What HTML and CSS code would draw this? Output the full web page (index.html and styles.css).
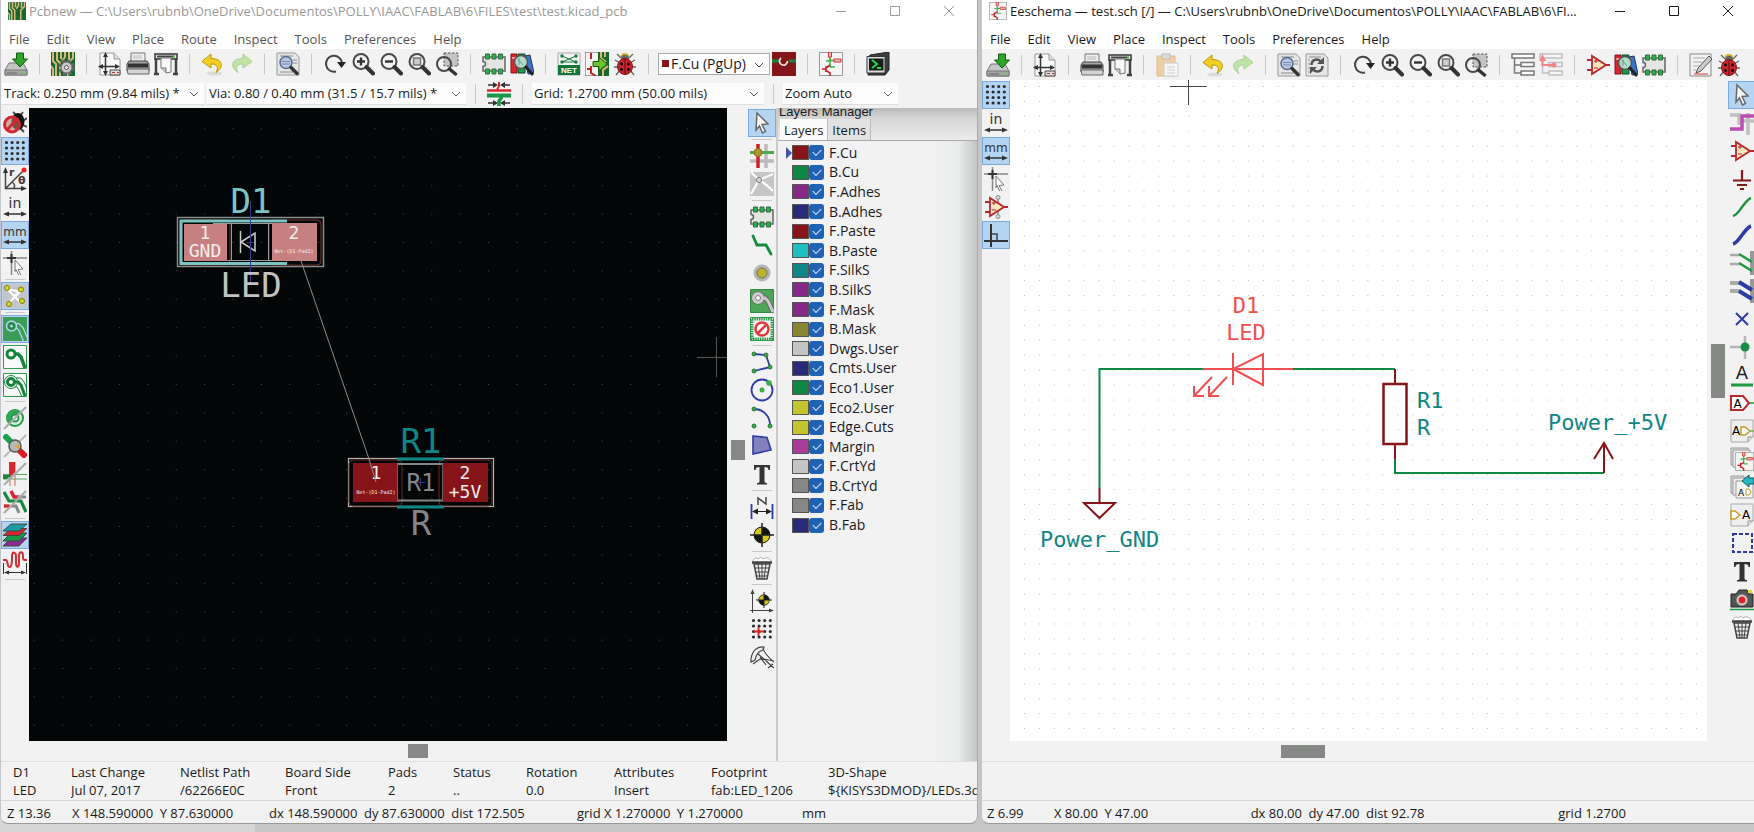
FILE: index.html
```html
<!DOCTYPE html>
<html lang="en">
<head>
<meta charset="utf-8">
<title>Pcbnew and Eeschema</title>
<link rel="stylesheet" href="styles.css">
</head>
<body>
<svg class="sprite" aria-hidden="true">
<symbol id="save" viewBox="0 0 24 24"><path d="M5 11h14l4 7v5H1v-5z" fill="#c4c6c4" stroke="#777"/><path d="M1 18h22v5H1z" fill="#a3a5a3" stroke="#777"/><path d="M3 21h10" stroke="#666"/><circle cx="19" cy="20.500" r="1" fill="#3e3"/><path d="M12.500 1h7v6h4L16 15 8.500 7h4z" fill="#2fa32a" stroke="#115c0e"/></symbol>
<symbol id="board" viewBox="0 0 24 24"><path d="M0 0h24v24H0z" fill="#15692f"/><path d="M2 0v9l3 3v12M6 0v8l3 3v13M10 0v7M14 0v5l-3 4M18 0v8M22 0v6l-5 5v13M0 14l2 3v7" stroke="#dcb77a" stroke-width="2" fill="none"/></symbol>
<symbol id="boardgear" viewBox="0 0 24 24"><use href="#board"/><circle cx="15.500" cy="15.500" r="6" fill="none" stroke="#666" stroke-width="4.500" stroke-dasharray="3 1.700"/><circle cx="15.500" cy="15.500" r="5.500" fill="#c9c9c9" stroke="#666"/><circle cx="15.500" cy="15.500" r="2" fill="#eee" stroke="#555"/></symbol>
<symbol id="page" viewBox="0 0 24 24"><path d="M2 1h14l6 6v16H2z" fill="#fafafa" stroke="#999"/><path d="M16 1v6h6" fill="#ddd" stroke="#999"/><path d="M7.500 3v18M1 14.500h19" stroke="#333" stroke-width="1.500"/><path d="M7.500 0L5 5h5zM7.500 24L5 19h5zM0 14.500l5-2.500v5zM22 14.500L17 12v5z" fill="#333"/><path d="M12 18h10v5H12z" fill="#ddd" stroke="#544"/><path d="M14 20.500h3M19 20.500h2" stroke="#a33"/></symbol>
<symbol id="print" viewBox="0 0 24 24"><path d="M5 1h14v9H5z" fill="#eee" stroke="#777"/><path d="M3 9h18l2 3v7H1v-7z" fill="#a5a7a5" stroke="#444"/><path d="M2 13.500h20" stroke="#333" stroke-width="4"/><path d="M1 17h22v5H2z" fill="#d4d4d4" stroke="#666"/><path d="M7 4h9M7 6h9" stroke="#bbb"/></symbol>
<symbol id="plot" viewBox="0 0 24 24"><path d="M2 6v16M22 6v16M0 22h5M19 22h5" stroke="#444" stroke-width="2.500"/><path d="M1 2h22v5H1z" fill="#e5e5e5" stroke="#333" stroke-width="1.500"/><path d="M3 4.500h18" stroke="#444" stroke-width="2"/><path d="M7 6h10v14l-5 1-5-5z" fill="#f8f8f8" stroke="#777"/><path d="M7 16h5v5" fill="#ccc" stroke="#777"/><circle cx="20" cy="4.500" r="1" fill="#3e3"/></symbol>
<symbol id="undo" viewBox="0 0 24 24"><ellipse cx="13" cy="21.500" rx="8" ry="2" fill="#ddd"/><path d="M10 2L1 9.500l9 6.500v-4c6-.5 8 3.500 5 8.500 8-5 7.500-14-5-14z" fill="#f2cf24" stroke="#bb9600"/></symbol>
<symbol id="redo" viewBox="0 0 24 24"><path d="M14 2l9 7.500-9 6.500v-4c-6-.5-8 3.500-5 8.500-8-5-7.500-14 5-14z" fill="#c2e3a6" stroke="#a8d18e"/></symbol>
<symbol id="lens" viewBox="0 0 24 24"><circle cx="10" cy="9.500" r="7.500" fill="none" stroke="#484a48" stroke-width="2"/><path d="M15.500 15l6.500 6.500" stroke="#333" stroke-width="4" stroke-linecap="round"/></symbol>
<symbol id="find" viewBox="0 0 24 24"><path d="M1 1h18l4 4v18H1z" fill="#e6e6e6" stroke="#999"/><path d="M4 4h13M4 20h13M17 8h4M17 11h4" stroke="#aaa" stroke-width="1.500"/><circle cx="10" cy="10.500" r="6" fill="#b9c6e2" stroke="#586a92" stroke-width="1.500"/><path d="M6 9.500h8M6 12h8" stroke="#7a8bb4"/><path d="M15 15.500l6 6" stroke="#333" stroke-width="3.500" stroke-linecap="round"/></symbol>
<symbol id="swap" viewBox="0 0 24 24"><path d="M1 1h18l4 4v18H1z" fill="#e6e6e6" stroke="#999"/><path d="M4 4h12M3 7h2M3 11h2M3 15h2M3 19h2" stroke="#aaa" stroke-width="1.500"/><path d="M6.500 12c0-6 7-7 9.500-3M17.500 13c0 6-7 7-9.500 3" fill="none" stroke="#555" stroke-width="2.500"/><path d="M19 4v7h-7zM5 21v-7h7z" fill="#555"/></symbol>
<symbol id="rotate" viewBox="0 0 24 24"><path d="M13 19.500a8 8 0 1 1 6-8" fill="none" stroke="#444" stroke-width="2"/><path d="M14 10h9l-4.500 6z" fill="#222"/></symbol>
<symbol id="zin" viewBox="0 0 24 24"><use href="#lens"/><path d="M10 5.500v8M6 9.500h8" stroke="#333" stroke-width="2.400"/></symbol>
<symbol id="zout" viewBox="0 0 24 24"><use href="#lens"/><path d="M6 9.500h8" stroke="#333" stroke-width="2.400"/></symbol>
<symbol id="zfit" viewBox="0 0 24 24"><use href="#lens"/><path d="M6.500 6h7v7h-7z" fill="#ccc" stroke="#777" stroke-width="1.500"/></symbol>
<symbol id="zsel" viewBox="0 0 24 24"><path d="M9 1h14v13H9z" fill="#c4c4c4" stroke="#555" stroke-dasharray="2.500 1.500"/><circle cx="9" cy="12" r="7" fill="none" stroke="#484a48" stroke-width="2"/><path d="M14.500 17l6 5" stroke="#333" stroke-width="3.500" stroke-linecap="round"/></symbol>
<symbol id="chipicon" viewBox="0 0 24 24"><path d="M1 5h22v14H1v-4.500a2.500 2.500 0 0 0 0-5z" fill="#e4e6e4" stroke="#666" stroke-width="1.500"/><path d="M3.500 2h4v5h-4zM10 2h4v5h-4zM16.500 2h4v5h-4zM3.500 17h4v5h-4zM10 17h4v5h-4zM16.500 17h4v5h-4z" fill="#2cb04b" stroke="#35683f"/></symbol>
<symbol id="lib" viewBox="0 0 24 24"><path d="M1 2h6v19H1z" fill="#d8262e" stroke="#811"/><path d="M8 2h7v19H8z" fill="#1c9c48" stroke="#143"/><path d="M15 4l5-1 4 18-6 1z" fill="#3d74c8" stroke="#235"/><path d="M2 6h4" stroke="#fff"/><circle cx="11" cy="10" r="6.500" fill="#cfe8e0" fill-opacity=".85" stroke="#555" stroke-width="1.500"/><path d="M8 7l5 6M9 13V6" stroke="#5a8"/><path d="M16 15l6 7" stroke="#222" stroke-width="3" stroke-linecap="round"/></symbol>
<symbol id="sch" viewBox="0 0 24 24"><path d="M.500.500h23v23H.500z" fill="#f7f5f3" stroke="#999"/><path d="M11 5v10M7 9h4M11 8.500h4M11 15h5" fill="none" stroke="#3ab54a" stroke-width="1.500"/><path d="M9.500 0h3v5h-3zM15 7h7v3h-7z" fill="#f3b9b0" stroke="#d0303a"/><path d="M3 17h4M7 14v6M7 16l4-3M7 18.500l4 2.500v3" fill="none" stroke="#c8202a" stroke-width="1.600"/><circle cx="11" cy="8.500" r="1.300" fill="#3ab54a"/></symbol>
<symbol id="update" viewBox="0 0 24 24"><path d="M0 0h14v24H0z" fill="#f7f5f3" stroke="#555"/><path d="M13 0h11v24H13z" fill="#15692f"/><path d="M16 0v6l5 4M20 0v5M18 24v-6l5-4" stroke="#dcb77a" stroke-width="2" fill="none"/><path d="M6 1v6M2 17h4M6 14v7l5 3" stroke="#c8202a" stroke-width="2" fill="none"/><path d="M8 9.500h6V5l8 7-8 7v-4.500H8z" fill="#6dc52e" stroke="#275a0c"/></symbol>
<symbol id="bug" viewBox="0 0 24 24"><path d="M4 2l4 4M20 2l-4 4M2 8l5 3M22 8l-5 3M1 15h6M23 15h-6M3 23l4-5M21 23l-4-5" stroke="#666" stroke-width="1.300"/><circle cx="12" cy="5.500" r="4" fill="#666"/><path d="M8 4l2-2h4l2 2" fill="none" stroke="#e3c020" stroke-width="1.500"/><ellipse cx="12" cy="14.500" rx="7.500" ry="8" fill="#c9252b" stroke="#811"/><path d="M12 7v15" stroke="#511"/><circle cx="8.500" cy="12" r="1.400"/><circle cx="15.500" cy="12" r="1.400"/><circle cx="8.500" cy="17.500" r="1.400"/><circle cx="15.500" cy="17.500" r="1.400"/></symbol>
<symbol id="pair" viewBox="0 0 24 24"><path d="M0 0h24v24H0z" fill="#841518"/><path d="M0 9h24" stroke="#0d8a45" stroke-width="3"/><circle cx="12" cy="9" r="5" fill="#841518"/><path d="M9 6a4 4 0 1 0 6.500 3" fill="none" stroke="#e5dede" stroke-width="1.800"/></symbol>
<symbol id="console" viewBox="0 0 24 24"><path d="M4 3l19-3v18l-4 5H2V7z" fill="#3c3f41" stroke="#222"/><path d="M1 4.500h18V21H1z" fill="#ddd" stroke="#333"/><path d="M3 6.500h14.500v12H3z" fill="#16201a"/><path d="M6 8l5 4-5 4" fill="none" stroke="#2ed44e" stroke-width="2"/><path d="M11 16h4" stroke="#2ed44e" stroke-width="2"/></symbol>
<symbol id="track" viewBox="0 0 24 24"><path d="M0 8.500h24" stroke="#d8262e" stroke-width="2.500"/><path d="M0 13.500h24" stroke="#199648" stroke-width="4"/><path d="M1 3h7M23 3h-7M1 21h7M23 21h-7" stroke="#333" stroke-width="1.500"/><path d="M6 0l5 3-5 3zM18 0l-5 3 5 3zM6 18l5 3-5 3zM18 18l-5 3 5 3z" fill="#333"/><path d="M12 0v4l-2 4" stroke="#d8262e" stroke-width="2" fill="none"/><path d="M12 24v-5l3-4" stroke="#199648" stroke-width="3.500" fill="none"/></symbol>
<symbol id="nodrc" viewBox="0 0 24 24"><path d="M10 1l3 3M20 1l-3 4M24 7l-4 3M24 16l-4-2M21 21l-4-4" stroke="#444" stroke-width="1.800"/><ellipse cx="15" cy="10.500" rx="6.500" ry="8.500" fill="#111"/><circle cx="9" cy="13.500" r="7.500" fill="#b77" fill-opacity=".6" stroke="#d0282e" stroke-width="3"/><path d="M4 19L14 8" stroke="#d0282e" stroke-width="3"/></symbol>
<symbol id="grid" viewBox="0 0 24 24"><path d="M3.500 3.500h19M3.500 9h19M3.500 14.500h19M3.500 20h19" stroke="#2e2e33" stroke-width="3.200" stroke-linecap="round" stroke-dasharray="0 5.600"/></symbol>
<symbol id="arrows" viewBox="0 0 24 24"><path d="M4 19h16" stroke="#333" stroke-width="1.500"/><path d="M0 19l6-2.500v5zM24 19l-6-2.500v5z" fill="#333"/></symbol>
<symbol id="pointer" viewBox="0 0 24 24"><path d="M7 2l11 11-6 .5 3.500 7-3 1.500-3-7-3.500 4z" fill="#fff" stroke="#666" stroke-width="1.500"/></symbol>
<symbol id="curs" viewBox="0 0 24 24"><path d="M0 7h24M8.500 0v24" stroke="#888" stroke-width="1.500"/><path d="M4 7h9M8.500 3v9" stroke="#333" stroke-width="2"/><path d="M12 9l8 9-5 .5 3 5.500-2 .5-3-6-1 2z" fill="#fff" stroke="#777"/></symbol>
<symbol id="rats" viewBox="0 0 24 24"><rect width="24" height="24" rx="3" fill="#c3c5c6"/><path d="M4 5l15 15M20 5L6 19M4 5l14 3M8 17l8-11" stroke="#fff" stroke-width="2"/><g fill="#d5dc1d" stroke="#777a10"><circle cx="4" cy="4" r="2.500"/><circle cx="18" cy="5.500" r="2.500"/><circle cx="6" cy="20" r="2.500"/><circle cx="19" cy="17" r="2.500"/></g></symbol>
<symbol id="zone1" viewBox="0 0 24 24"><path d="M0 0h24v24H0z" fill="#3d9c57"/><path d="M11 9h4l3 3 5 12" fill="none" stroke="#b7d6ee" stroke-width="6"/><path d="M11 9h4l3 3 5 12" fill="none" stroke="#3d9c57" stroke-width="3.500"/><circle cx="8.500" cy="9" r="5" fill="#3d9c57" stroke="#b7d6ee" stroke-width="1.500"/><circle cx="8.500" cy="9" r="2.500" fill="#b7d6ee" stroke="#1d8a45" stroke-width="2"/></symbol>
<symbol id="zone2" viewBox="0 0 24 24"><path d="M.500.500h23v23H.500z" fill="#fafafa" stroke="#2d9c4c"/><path d="M11 9h4l3 3 4 11" fill="none" stroke="#16853c" stroke-width="3.500"/><circle cx="8" cy="9" r="4" fill="#fff" stroke="#16853c" stroke-width="3"/></symbol>
<symbol id="zone3" viewBox="0 0 24 24"><path d="M.500.500h23v23H.500z" fill="#fafafa" stroke="#2d9c4c"/><path d="M11 9h4l3 3 4 11" fill="none" stroke="#16853c" stroke-width="3"/><path d="M13 5h5l3 4 3 7M12 14h2l2 3 3 7" fill="none" stroke="#16853c"/><circle cx="8" cy="9" r="6.500" fill="none" stroke="#16853c"/><circle cx="8" cy="9" r="3.500" fill="#fff" stroke="#16853c" stroke-width="3"/></symbol>
<symbol id="viaout" viewBox="0 0 24 24"><circle cx="12" cy="12" r="8" fill="#dff0e0" stroke="#219a47" stroke-width="2"/><path d="M18 6A8 8 0 1 0 6 18z" fill="#35a556"/><circle cx="12" cy="12" r="3.500" fill="#eee" stroke="#219a47" stroke-width="2"/><path d="M1 23L23 1" stroke="#aaa" stroke-width="2"/></symbol>
<symbol id="vianum" viewBox="0 0 24 24"><path d="M1 1l10 10" stroke="#1aa24b" stroke-width="6"/><path d="M12 12l11 11" stroke="#e01b22" stroke-width="6"/><path d="M1 23L23 1" stroke="#bbb" stroke-width="2"/><circle cx="12" cy="12" r="6" fill="#b8b8b8" stroke="#555" stroke-width="1.500"/><path d="M12 12l4-1v4z" fill="#e0a01b"/></symbol>
<symbol id="hc" viewBox="0 0 24 24"><path d="M0 12.500h24M0 17h24" stroke="#59a663"/><path d="M7 0v24M12 0v24" stroke="#c86a5a"/><path d="M6 0h6v10l-6 6z" fill="#d8262e"/><path d="M0 13h8l-4 4H0z" fill="#17863e"/><path d="M1 23L23 1" stroke="#aaa" stroke-width="2"/></symbol>
<symbol id="trk" viewBox="0 0 24 24"><path d="M8 1l3 6h5" fill="none" stroke="#d8262e" stroke-width="3.500"/><path d="M14 7h9M1 16h6" stroke="#888" stroke-width="3"/><path d="M1 16h5" stroke="#d8262e" stroke-width="3"/><path d="M8 16h5l3 7" fill="none" stroke="#888" stroke-width="3"/><path d="M1 2l5 9h12l5 11" fill="none" stroke="#158a3e" stroke-width="3.200"/><path d="M1 23L23 1" stroke="#aaa" stroke-width="2"/></symbol>
<symbol id="layers" viewBox="0 0 24 24"><g stroke="#444"><path d="M8 15h16l-8 8H0z" fill="#8f2a94"/><path d="M8 10h16l-8 8H0z" fill="#18974a"/><path d="M8 5.500h16l-8 7H0z" fill="#d8262e"/><path d="M8 1h16l-8 7H0z" fill="#1a9ca4"/></g></symbol>
<symbol id="meander" viewBox="0 0 24 24"><path d="M0 9h3c2 0 1 7 3.500 7S9 10 9 5s4-4 4 0v7c0 5 3 5 3 0V5c0-5 4-5 4 0v2c0 2 1 2 4 2" fill="none" stroke="#cf2f35" stroke-width="2"/><path d="M.500 12v11M23.500 12v11M3 21.500h18" stroke="#333"/><path d="M1 21.500l5-2v4zM23 21.500l-5-2v4z" fill="#333"/></symbol>
<symbol id="hl" viewBox="0 0 24 24"><path d="M16 0v24M0 17h24" stroke="#bbb" stroke-width="3.500"/><path d="M8 0v24" stroke="#cf2026" stroke-width="3.500"/><path d="M0 8.500h24" stroke="#4aab53" stroke-width="3"/><circle cx="8" cy="8.500" r="4" fill="#b59232" stroke="#8a6c1c"/></symbol>
<symbol id="localrats" viewBox="0 0 24 24"><path d="M0 0h24v24H0z" fill="#c6c6c6"/><path d="M9 8L1 0M9 8l14-6M9 8L1 22M9 8c6 3 10 7 14 11" fill="none" stroke="#fff" stroke-width="2"/><circle cx="9" cy="8" r="2.500" fill="#ddd" stroke="#777"/></symbol>
<symbol id="route" viewBox="0 0 24 24"><path d="M3 3l4 9h9l5 9" fill="none" stroke="#158a3e" stroke-width="2.800" stroke-linecap="round"/></symbol>
<symbol id="via" viewBox="0 0 24 24"><circle cx="12" cy="12" r="7" fill="#b0aa28" stroke="#b5b5b5" stroke-width="3"/><circle cx="12" cy="12" r="5" fill="#b9b32a" stroke="#777"/></symbol>
<symbol id="zone" viewBox="0 0 24 24"><path d="M.500.500h23v23H.500z" fill="#4fa659" stroke="#2d8a40"/><path d="M11 9h4l3 3 5 11" fill="none" stroke="#666" stroke-width="5"/><circle cx="8" cy="9" r="4.500" fill="none" stroke="#666" stroke-width="4.500"/><path d="M11 9h4l3 3 5 11" fill="none" stroke="#ccc" stroke-width="3"/><circle cx="8" cy="9" r="4.500" fill="#eee" stroke="#ccc" stroke-width="3"/><circle cx="8" cy="9" r="2.500" fill="#fff" stroke="#777"/></symbol>
<symbol id="keepout" viewBox="0 0 24 24"><path d="M2 2h20v20H2z" fill="#f7f7f7" stroke="#2c9a4b" stroke-width="3" stroke-dasharray="1.500 .8"/><path d="M.500.500h23v23H.500z" fill="none" stroke="#2c9a4b"/><circle cx="12" cy="12" r="6.500" fill="#fff" stroke="#e0393d" stroke-width="2.500"/><path d="M8 16L16 8" stroke="#e0393d" stroke-width="2.500"/></symbol>
<symbol id="poly" viewBox="0 0 24 24"><path d="M4 4l12 1 4 12-16 4" fill="none" stroke="#2d3ba5" stroke-width="1.800"/><g fill="#39ad4c" stroke="#287b36"><circle cx="4" cy="4" r="2"/><circle cx="16" cy="5" r="2"/><circle cx="20" cy="17" r="2"/><circle cx="4" cy="21" r="2"/></g></symbol>
<symbol id="circle" viewBox="0 0 24 24"><circle cx="12" cy="12" r="10.500" fill="none" stroke="#2d3ba5" stroke-width="1.800"/><g fill="#39ad4c"><circle cx="12" cy="12" r="2.500"/><circle cx="19" cy="5" r="2.800"/></g></symbol>
<symbol id="arc" viewBox="0 0 24 24"><path d="M4 3c9 0 16 7 16 16" fill="none" stroke="#2d3ba5" stroke-width="1.800"/><g fill="#39ad4c" stroke="#287b36"><circle cx="4" cy="3" r="2"/><circle cx="4" cy="20" r="2"/><circle cx="20" cy="20" r="2"/></g></symbol>
<symbol id="fill" viewBox="0 0 24 24"><path d="M3 2l14 1.500L21 16 3 20z" fill="#8283bd" stroke="#2d3ba5" stroke-width="1.600"/></symbol>
<symbol id="text" viewBox="0 0 24 24"><path d="M4 3h16v5h-1.500c0-2-1-3-4-3v14c0 1.500.5 2 2.500 2v1.500H7V21c2 0 2.500-.5 2.500-2V5c-3 0-4 1-4 3H4z" fill="#333"/></symbol>
<symbol id="dim" viewBox="0 0 24 24"><path d="M1.500 9v15M22.500 9v15" stroke="#2d3ba5" stroke-width="1.800"/><path d="M4 16.500h16" stroke="#222"/><path d="M2 16.500l6-3v6zM22 16.500l-6-3v6z" fill="#222"/><path d="M8 10V3l8 6V2" fill="none" stroke="#444" stroke-width="1.500"/></symbol>
<symbol id="target" viewBox="0 0 24 24"><circle cx="12" cy="12" r="8" fill="#111"/><path d="M12 4v8H4a8 8 0 0 1 8-8zM12 20v-8h8a8 8 0 0 1-8 8z" fill="#d3c81a"/><circle cx="12" cy="12" r="8" fill="none" stroke="#222"/><path d="M12 0v24M0 12h24" stroke="#222" stroke-width="1.500"/></symbol>
<symbol id="bin" viewBox="0 0 24 24"><path d="M3 5c1-4 4-3 5-2 2-2 4-2 5 0 3-2 7-1 8 2" fill="#fff" stroke="#aaa"/><path d="M2 6.500h20" stroke="#444" stroke-width="2.500"/><path d="M4 8h16l-3 15H7z" fill="#eee" stroke="#444" stroke-width="1.500"/><path d="M8 8l2 15M12 8v15M16 8l-2 15M5 12h14M5.500 16h13M6 20h12" stroke="#444"/></symbol>
<symbol id="origin" viewBox="0 0 24 24"><path d="M2.500 24V3M0 21.500h21" stroke="#444"/><path d="M2.500 0L.500 5h4zM24 21.500l-5-2v4z" fill="#444"/><svg x="6" y="3" width="16" height="16"><use href="#target"/></svg></symbol>
<symbol id="gridorg" viewBox="0 0 24 24"><use href="#grid"/><path d="M8.500 10v9M4 14.500h9" stroke="#d22" stroke-width="1.800"/></symbol>
<symbol id="measure" viewBox="0 0 24 24"><path d="M1 14C2 6 7 1 14 2l-1 3c-4 1-7 5-8 10l-4 2zM13 3c1 5 5 9 11 14M8 9l6 5 10 2M3 19l7-5 9 1M10 12l6 8M15 15l9 8M18 23l5-4" fill="none" stroke="#444" stroke-width="1.200"/></symbol>
<symbol id="paste" viewBox="0 0 24 24"><path d="M2 3h18v20H2z" fill="#edcfa2" stroke="#e2bd86"/><path d="M7 1h8v5H7z" fill="#ddd" stroke="#bbb"/><path d="M9 10h14v13H9z" fill="#f6f6f6" stroke="#ccc"/><path d="M12 14h8M12 17h8M12 20h8" stroke="#ccc"/></symbol>
<symbol id="hier" viewBox="0 0 24 24"><path d="M3.500 5v15H10M3.500 12H10" fill="none" stroke="#777" stroke-width="1.500"/><path d="M1 1h22v4H1zM10 9.500h13v4H10zM10 18h13v4H10z" fill="#fff" stroke="#777" stroke-width="1.500"/></symbol>
<symbol id="leave" viewBox="0 0 24 24"><g opacity=".4"><use href="#hier"/></g><path d="M3.500 5v7H15" fill="none" stroke="#f0868a" stroke-width="2"/><path d="M3.500 1L0 8h7z" fill="#f0868a"/><circle cx="15" cy="12" r="2.500" fill="#f0868a"/></symbol>
<symbol id="opamp" viewBox="0 0 24 24"><path d="M1 7h5M1 17h5M18 12h6" stroke="#b8282c" stroke-width="1.800"/><path d="M6 3v18l14-9z" fill="#fbe6c0" stroke="#b8282c" stroke-width="1.800"/><path d="M8 8h4M10 6v4M8 15h4" stroke="#b8282c"/></symbol>
<symbol id="edit" viewBox="0 0 24 24"><path d="M1 1h21v22H1z" fill="#f3f3f3" stroke="#888"/><path d="M4 5h12M4 9h9M4 13h6M4 17h3" stroke="#aaa"/><path d="M20 3l3 3L12 18l-5 2 2-5z" fill="#ccc" stroke="#555"/><path d="M5 21h14" stroke="#d33"/></symbol>
<symbol id="hidden" viewBox="0 0 24 24"><path d="M14 1v22" stroke="#888" stroke-width="1.500"/><circle cx="14" cy="2.500" r="2" fill="#ddd" stroke="#888"/><circle cx="14" cy="21.500" r="2" fill="#ddd" stroke="#888"/><use href="#opamp"/></symbol>
<symbol id="ortho" viewBox="0 0 24 24"><path d="M7 1v23M0 18h24" stroke="#333" stroke-width="2"/><path d="M7 11h6v7" fill="none" stroke="#444" stroke-width="1.500"/></symbol>
<symbol id="hlnet" viewBox="0 0 24 24"><path d="M9 2v12M18 2v22M9 10h15M0 4h9" stroke="#c0c0c0" stroke-width="3.500" fill="none"/><path d="M0 18h12V5h12" fill="none" stroke="#bb4db3" stroke-width="3.500"/></symbol>
<symbol id="power" viewBox="0 0 24 24"><path d="M12 3v11M3 13.500h18M7 18h10M10 22h4" stroke="#851a1d" stroke-width="2.200"/></symbol>
<symbol id="wire" viewBox="0 0 24 24"><path d="M3 21c4-1 6-5 9-9s6-8 9-9" fill="none" stroke="#1f9340" stroke-width="2.400"/></symbol>
<symbol id="bus" viewBox="0 0 24 24"><path d="M3 21c4-1 6-5 9-9s6-8 9-9" fill="none" stroke="#2d3ba5" stroke-width="3.600"/></symbol>
<symbol id="went" viewBox="0 0 24 24"><path d="M22 0v24" stroke="#999" stroke-width="4"/><path d="M0 4h10M0 13h10" stroke="#aaa" stroke-width="2.500"/><path d="M9 3l13 8M9 12l13 8" stroke="#1f9a40" stroke-width="2.500"/></symbol>
<symbol id="bent" viewBox="0 0 24 24"><path d="M22 0v24" stroke="#999" stroke-width="4"/><path d="M0 4h10M0 12h10" stroke="#aaa" stroke-width="4"/><path d="M9 3l13 8M9 12l13 8" stroke="#2d3ba5" stroke-width="4"/></symbol>
<symbol id="nc" viewBox="0 0 24 24"><path d="M6 6l12 12M18 6L6 18" stroke="#2d3ba5" stroke-width="2"/></symbol>
<symbol id="junction" viewBox="0 0 24 24"><path d="M15 1v23M0 12h14" stroke="#b5b5b5" stroke-width="2.500"/><circle cx="15" cy="12" r="4.500" fill="#168f43"/></symbol>
<symbol id="sheetbg" viewBox="0 0 24 24"><path d="M1 1h22v17l-5 5H1z" fill="#eee" stroke="#aaa"/><path d="M18 23v-5h5" fill="#ddd" stroke="#999"/></symbol>
<symbol id="sheets" viewBox="0 0 24 24"><path d="M1 1h17v17H1z" fill="#ddd" stroke="#999"/><path d="M3 3h17v17H3z" fill="#eee" stroke="#999"/><svg x="5" y="5" width="19" height="19"><use href="#sch"/></svg></symbol>
<symbol id="dash" viewBox="0 0 24 24"><path d="M3 3h19v18H3z" fill="none" stroke="#2d3ba5" stroke-width="2" stroke-dasharray="4 2"/></symbol>
<symbol id="camera" viewBox="0 0 24 24"><path d="M1 7h5l3-4h8l2 4h4v13H1z" fill="#555" stroke="#222"/><path d="M18 3h4v3h-4z" fill="#e8d820"/><circle cx="12" cy="13" r="5.500" fill="#ddd" stroke="#888"/><circle cx="12" cy="13" r="3.500" fill="#e01f26"/><path d="M0 22.500h24" stroke="#1f9a40" stroke-width="1.500"/></symbol>
<symbol id="chev" viewBox="0 0 10 6"><path d="M1 1l4 4 4-4" fill="none" stroke="#555"/></symbol>
</svg>

<main class="desktop">
<section class="window pcb" aria-label="Pcbnew">
<header class="titlebar">
<svg class="logo"><use href="#board"/></svg>
<h1>Pcbnew — C:\Users\rubnb\OneDrive\Documentos\POLLY\IAAC\FABLAB\6\FILES\test\test.kicad_pcb</h1>
<div class="winctl">
<button aria-label="Minimize"><svg viewBox="0 0 12 12"><path d="M1 6.500h10"/></svg></button>
<button aria-label="Maximize"><svg viewBox="0 0 12 12"><path d="M1.500 1.500h9v9h-9z"/></svg></button>
<button aria-label="Close"><svg viewBox="0 0 12 12"><path d="M1 1l10 10M11 1L1 11"/></svg></button>
</div>
</header>
<nav class="menu"><button>File</button><button>Edit</button><button>View</button><button>Place</button><button>Route</button><button>Inspect</button><button>Tools</button><button>Preferences</button><button>Help</button></nav>
<div class="toolbar">
<button aria-label="Save"><svg><use href="#save"/></svg></button><hr>
<button aria-label="Board setup"><svg><use href="#boardgear"/></svg></button><hr>
<button aria-label="Page settings"><svg><use href="#page"/></svg></button>
<button aria-label="Print"><svg><use href="#print"/></svg></button>
<button aria-label="Plot"><svg><use href="#plot"/></svg></button><hr>
<button aria-label="Undo"><svg><use href="#undo"/></svg></button>
<button aria-label="Redo"><svg><use href="#redo"/></svg></button><hr>
<button aria-label="Find"><svg><use href="#find"/></svg></button><hr>
<button aria-label="Refresh"><svg><use href="#rotate"/></svg></button>
<button aria-label="Zoom in"><svg><use href="#zin"/></svg></button>
<button aria-label="Zoom out"><svg><use href="#zout"/></svg></button>
<button aria-label="Zoom to fit"><svg><use href="#zfit"/></svg></button>
<button aria-label="Zoom to selection"><svg><use href="#zsel"/></svg></button><hr>
<button aria-label="Footprint editor"><svg><use href="#chipicon"/></svg></button>
<button aria-label="Footprint browser"><svg><use href="#lib"/></svg></button><hr>
<button aria-label="Load netlist"><svg viewBox="0 0 24 24"><path d="M1 1h22v22H1z" fill="#f2f2f2" stroke="#aaa"/><path d="M5 4l14 6M19 4L5 10h14" stroke="#197a41" fill="none"/><g fill="#197a41"><circle cx="5" cy="4" r="1.700"/><circle cx="19" cy="4" r="1.700"/><circle cx="5" cy="10" r="1.700"/><circle cx="19" cy="10" r="1.700"/></g><path d="M1 13h22v10H1z" fill="#12763b"/><text x="12" y="21" text-anchor="middle" class="net-word">NET</text></svg></button>
<button aria-label="Update PCB"><svg><use href="#update"/></svg></button>
<button aria-label="Design rules check"><svg><use href="#bug"/></svg></button><hr>
<div class="drop layer"><span class="chip"></span><select aria-label="Active layer"><option>F.Cu (PgUp)</option></select><svg><use href="#chev"/></svg></div>
<button aria-label="Layer pair"><svg><use href="#pair"/></svg></button><hr>
<button aria-label="Open schematic"><svg><use href="#sch"/></svg></button><hr>
<button aria-label="Scripting console"><svg><use href="#console"/></svg></button>
</div>
<div class="toolbar second">
<div class="drop w-track"><select aria-label="Track width"><option>Track: 0.250 mm (9.84 mils) *</option></select><svg><use href="#chev"/></svg></div>
<div class="drop w-via"><select aria-label="Via size"><option>Via: 0.80 / 0.40 mm (31.5 / 15.7 mils) *</option></select><svg><use href="#chev"/></svg></div><hr>
<button aria-label="Auto track width"><svg><use href="#track"/></svg></button><hr>
<div class="drop w-grid"><select aria-label="Grid"><option>Grid: 1.2700 mm (50.00 mils)</option></select><svg><use href="#chev"/></svg></div><hr>
<div class="drop w-zoom"><select aria-label="Zoom"><option>Zoom Auto</option></select><svg><use href="#chev"/></svg></div>
</div>
<div class="work">
<div class="tools left">
<button aria-label="DRC off"><svg><use href="#nodrc"/></svg></button>
<button class="on" aria-label="Show grid"><svg><use href="#grid"/></svg></button>
<button aria-label="Polar coordinates"><svg viewBox="0 0 24 24"><path d="M2.500 22V3M2 21.500h19M2.500 21.500L20 4M9 15c3 2 3 4 2 6" fill="none" stroke="#444" stroke-width="1.500"/><path d="M2.500 0L0 6h5zM24 21.500L18 19v5z" fill="#333"/><circle cx="21" cy="3" r="2.500" fill="#e22"/><text x="6" y="9" class="sym">r</text><text x="15" y="17" class="sym">θ</text></svg></button>
<button aria-label="Inches"><svg viewBox="0 0 24 24"><use href="#arrows"/><text x="12" y="13" text-anchor="middle" class="unit">in</text></svg></button>
<button class="on" aria-label="Millimetres"><svg viewBox="0 0 24 24"><use href="#arrows"/><text x="12" y="13" text-anchor="middle" class="unit mm">mm</text></svg></button>
<button aria-label="Cursor shape"><svg><use href="#curs"/></svg></button><hr>
<button class="on" aria-label="Ratsnest"><svg><use href="#rats"/></svg></button><hr>
<button class="on" aria-label="Filled zones"><svg><use href="#zone1"/></svg></button>
<button aria-label="Hide zone fill"><svg><use href="#zone2"/></svg></button>
<button aria-label="Zone outlines"><svg><use href="#zone3"/></svg></button><hr>
<button aria-label="Pad outlines"><svg><use href="#viaout"/></svg></button>
<button aria-label="Via outlines"><svg><use href="#vianum"/></svg></button>
<button aria-label="Track outlines"><svg><use href="#hc"/></svg></button>
<button aria-label="High contrast"><svg><use href="#trk"/></svg></button><hr>
<button class="on" aria-label="Layers manager"><svg><use href="#layers"/></svg></button>
<button aria-label="Microwave tools"><svg><use href="#meander"/></svg></button><hr>
</div>
<div class="canvas-area">
<svg class="canvas board" role="img" aria-label="Board layout">
<defs>
<pattern id="bdots" width="28.400" height="28.400" patternUnits="userSpaceOnUse" x="33.700" y="128.400"><rect width="1" height="1" fill="#4c4f4f"/></pattern>
</defs>
<g transform="translate(-29 -108)">
<rect x="29" y="108" width="100%" height="100%" fill="url(#bdots)"/>
<path d="M697 357.500h40M716.500 337v40" stroke="#555"/>
<rect x="177.500" y="217.500" width="146" height="49" fill="none" stroke="#8d8d8a" stroke-width="1.500"/>
<g fill="none" stroke="#6e3430"><rect x="180" y="220" width="50" height="45" rx="4"/><rect x="269" y="220" width="52" height="45" rx="4"/></g>
<path d="M213 223.500h60M227 260.500h45M231.500 224v36M268.500 224v36" stroke="#9a9a9a" fill="none"/>
<path d="M287 221H181v42.500h106" fill="none" stroke="#7cc4c3" stroke-width="3"/>
<path d="M184 224h43v37h-43zM272 223h45v38h-45z" fill="#c68080"/>
<path d="M240.500 231v22M241 242l14-9v18z" fill="none" stroke="#ccc" stroke-width="1.500"/>
<path d="M250.500 201v81M247 242.500h7" stroke="#343a8c"/>
<g text-anchor="middle" class="pcbtext">
<text x="251" y="213" class="t34 cyan">D1</text>
<text x="251" y="297" class="t34 silver">LED</text>
<text x="205" y="239" class="t18 white">1</text><text x="205" y="257" class="t18 white">GND</text>
<text x="294" y="239" class="t18 white">2</text><text x="294" y="253" class="t5 white">Net-(D1-Pad2)</text>
</g>
<rect x="348.500" y="458.500" width="145" height="48" fill="none" stroke="#b5b5b5" stroke-width="1.200"/>
<g fill="none" stroke="#6b2b1d"><rect x="349" y="460" width="53" height="46" rx="4"/><rect x="439" y="460" width="53" height="46" rx="4"/></g>
<path d="M397 464h47M397 500.500h47" stroke="#858585" stroke-width="2"/>
<path d="M397.500 464v37M442.500 464v37" stroke="#666"/>
<path d="M397 459h47M397 507h47" stroke="#108585" stroke-width="3"/>
<path d="M353 463h44v39h-44zM443 463h45v39h-45z" fill="#851518"/>
<path d="M417 482.500h8M420.500 478v8" stroke="#30367f"/>
<g text-anchor="middle" class="pcbtext">
<text x="421" y="453" class="t34 teal">R1</text>
<text x="421" y="535" class="t34 gray">R</text>
<text x="421" y="491" class="t24 gray">R1</text>
<text x="376" y="479" class="t18 white">1</text><text x="376" y="494" class="t5 white">Net-(D1-Pad2)</text>
<text x="465" y="479" class="t18 white">2</text><text x="465" y="498" class="t18 white">+5V</text>
</g>
<path d="M301 261l67 195 8 26" fill="none" stroke="#8f8b8a"/>
</g>
</svg>
<div class="vbar"><span></span></div>
<div class="hbar"><span></span></div>
</div>
<div class="tools right">
<button class="on" aria-label="Select"><svg><use href="#pointer"/></svg></button><hr>
<button aria-label="Highlight net"><svg><use href="#hl"/></svg></button>
<button aria-label="Local ratsnest"><svg><use href="#localrats"/></svg></button><hr>
<button aria-label="Add footprint"><svg><use href="#chipicon"/></svg></button>
<button aria-label="Route tracks"><svg><use href="#route"/></svg></button>
<button aria-label="Add via"><svg><use href="#via"/></svg></button>
<button aria-label="Add zone"><svg><use href="#zone"/></svg></button>
<button aria-label="Add keepout"><svg><use href="#keepout"/></svg></button><hr>
<button aria-label="Draw line"><svg><use href="#poly"/></svg></button>
<button aria-label="Draw circle"><svg><use href="#circle"/></svg></button>
<button aria-label="Draw arc"><svg><use href="#arc"/></svg></button>
<button aria-label="Draw polygon"><svg><use href="#fill"/></svg></button>
<button aria-label="Add text"><svg><use href="#text"/></svg></button><hr>
<button aria-label="Add dimension"><svg><use href="#dim"/></svg></button>
<button aria-label="Add target"><svg><use href="#target"/></svg></button><hr>
<button aria-label="Delete"><svg><use href="#bin"/></svg></button><hr>
<button aria-label="Drill origin"><svg><use href="#origin"/></svg></button>
<button aria-label="Grid origin"><svg><use href="#gridorg"/></svg></button>
<button aria-label="Measure"><svg><use href="#measure"/></svg></button>
</div>
<aside class="layers">
<h2>Layers Manager</h2>
<div class="tabs"><button class="sel">Layers</button><button>Items</button></div>
<ul>
<li class="cur"><i class="red"></i><label><input type="checkbox" checked>F.Cu</label></li>
<li><i class="green"></i><label><input type="checkbox" checked>B.Cu</label></li>
<li><i class="purple"></i><label><input type="checkbox" checked>F.Adhes</label></li>
<li><i class="navy"></i><label><input type="checkbox" checked>B.Adhes</label></li>
<li><i class="red"></i><label><input type="checkbox" checked>F.Paste</label></li>
<li><i class="aqua"></i><label><input type="checkbox" checked>B.Paste</label></li>
<li><i class="sea"></i><label><input type="checkbox" checked>F.SilkS</label></li>
<li><i class="purple"></i><label><input type="checkbox" checked>B.SilkS</label></li>
<li><i class="purple"></i><label><input type="checkbox" checked>F.Mask</label></li>
<li><i class="olive"></i><label><input type="checkbox" checked>B.Mask</label></li>
<li><i class="light"></i><label><input type="checkbox" checked>Dwgs.User</label></li>
<li><i class="navy"></i><label><input type="checkbox" checked>Cmts.User</label></li>
<li><i class="green"></i><label><input type="checkbox" checked>Eco1.User</label></li>
<li><i class="yellow"></i><label><input type="checkbox" checked>Eco2.User</label></li>
<li><i class="yellow"></i><label><input type="checkbox" checked>Edge.Cuts</label></li>
<li><i class="pink"></i><label><input type="checkbox" checked>Margin</label></li>
<li><i class="light"></i><label><input type="checkbox" checked>F.CrtYd</label></li>
<li><i class="midgray"></i><label><input type="checkbox" checked>B.CrtYd</label></li>
<li><i class="midgray"></i><label><input type="checkbox" checked>F.Fab</label></li>
<li><i class="navy"></i><label><input type="checkbox" checked>B.Fab</label></li>
</ul>
</aside>
</div>
<dl class="info">
<div><dt>D1</dt><dd>LED</dd></div>
<div><dt>Last Change</dt><dd>Jul 07, 2017</dd></div>
<div><dt>Netlist Path</dt><dd>/62266E0C</dd></div>
<div><dt>Board Side</dt><dd>Front</dd></div>
<div><dt>Pads</dt><dd>2</dd></div>
<div><dt>Status</dt><dd>..</dd></div>
<div><dt>Rotation</dt><dd>0.0</dd></div>
<div><dt>Attributes</dt><dd>Insert</dd></div>
<div><dt>Footprint</dt><dd>fab:LED_1206</dd></div>
<div><dt>3D-Shape</dt><dd>${KISYS3DMOD}/LEDs.3d</dd></div>
</dl>
<footer class="status"><span>Z 13.36</span><span>X 148.590000&ensp;Y 87.630000</span><span>dx 148.590000&ensp;dy 87.630000&ensp;dist 172.505</span><span>grid X 1.270000&ensp;Y 1.270000</span><span>mm</span></footer>
</section>

<section class="window sch" aria-label="Eeschema">
<header class="titlebar">
<svg class="logo"><use href="#sch"/></svg>
<h1>Eeschema — test.sch [/] — C:\Users\rubnb\OneDrive\Documentos\POLLY\IAAC\FABLAB\6\FI...</h1>
<div class="winctl">
<button aria-label="Minimize"><svg viewBox="0 0 12 12"><path d="M1 6.500h10"/></svg></button>
<button aria-label="Maximize"><svg viewBox="0 0 12 12"><path d="M1.500 1.500h9v9h-9z"/></svg></button>
<button aria-label="Close"><svg viewBox="0 0 12 12"><path d="M1 1l10 10M11 1L1 11"/></svg></button>
</div>
</header>
<nav class="menu"><button>File</button><button>Edit</button><button>View</button><button>Place</button><button>Inspect</button><button>Tools</button><button>Preferences</button><button>Help</button></nav>
<div class="toolbar">
<button aria-label="Save"><svg><use href="#save"/></svg></button><hr>
<button aria-label="Page settings"><svg><use href="#page"/></svg></button><hr>
<button aria-label="Print"><svg><use href="#print"/></svg></button>
<button aria-label="Plot"><svg><use href="#plot"/></svg></button><hr>
<button aria-label="Paste"><svg><use href="#paste"/></svg></button><hr>
<button aria-label="Undo"><svg><use href="#undo"/></svg></button>
<button aria-label="Redo"><svg><use href="#redo"/></svg></button><hr>
<button aria-label="Find"><svg><use href="#find"/></svg></button>
<button aria-label="Find and replace"><svg><use href="#swap"/></svg></button><hr>
<button aria-label="Refresh"><svg><use href="#rotate"/></svg></button>
<button aria-label="Zoom in"><svg><use href="#zin"/></svg></button>
<button aria-label="Zoom out"><svg><use href="#zout"/></svg></button>
<button aria-label="Zoom to fit"><svg><use href="#zfit"/></svg></button>
<button aria-label="Zoom to selection"><svg><use href="#zsel"/></svg></button><hr>
<button aria-label="Hierarchy"><svg><use href="#hier"/></svg></button>
<button aria-label="Leave sheet"><svg><use href="#leave"/></svg></button><hr>
<button aria-label="Symbol editor"><svg><use href="#opamp"/></svg></button>
<button aria-label="Symbol browser"><svg><use href="#lib"/></svg></button>
<button aria-label="Footprint editor"><svg><use href="#chipicon"/></svg></button><hr>
<button aria-label="Annotate"><svg><use href="#edit"/></svg></button>
<button aria-label="Rules check"><svg><use href="#bug"/></svg></button>
</div>
<div class="work">
<div class="tools left">
<button class="on" aria-label="Show grid"><svg><use href="#grid"/></svg></button>
<button aria-label="Inches"><svg viewBox="0 0 24 24"><use href="#arrows"/><text x="12" y="13" text-anchor="middle" class="unit">in</text></svg></button>
<button class="on" aria-label="Millimetres"><svg viewBox="0 0 24 24"><use href="#arrows"/><text x="12" y="13" text-anchor="middle" class="unit mm">mm</text></svg></button>
<button aria-label="Cursor shape"><svg><use href="#curs"/></svg></button>
<button aria-label="Hidden pins"><svg><use href="#hidden"/></svg></button>
<button class="on" aria-label="Orthogonal wires"><svg><use href="#ortho"/></svg></button>
</div>
<div class="canvas-area">
<svg class="canvas sheet" role="img" aria-label="Schematic">
<defs><pattern id="sdots" width="14.930" height="14.930" patternUnits="userSpaceOnUse" x="1024" y="86"><rect width="1" height="1" fill="#bbb"/></pattern></defs>
<g transform="translate(-1010 -80)">
<rect x="1010" y="80" width="100%" height="100%" fill="url(#sdots)"/>
<path d="M1170 86.500h37M1188.500 80v25" stroke="#444"/>
<g fill="none" stroke-width="2">
<path d="M1099.500 488V369H1203M1293 369h102M1395 459v14h209" stroke="#0f8a44"/>
<path d="M1395 369v14M1395 444v15M1099.500 488v15M1604 473v-30M1594 459l10-16 9 16M1084 503h31l-15.500 15z" stroke="#851518"/>
<path d="M1383.500 384h23v60h-23z" stroke="#851518" stroke-width="2.500"/>
<path d="M1203 369h90M1233 353v32M1263 354v31l-30-16zM1212 377l-18 19M1194 386v10h10M1227 377l-18 19M1209 386v10h10" stroke="#f25050"/>
</g>
<g class="schtext">
<text x="1246" y="313" text-anchor="middle" class="coral">D1</text>
<text x="1246" y="340" text-anchor="middle" class="coral">LED</text>
<text x="1417" y="408" class="teal">R1</text>
<text x="1417" y="435" class="teal">R</text>
<text x="1548" y="430" class="teal">Power_+5V</text>
<text x="1040" y="547" class="teal">Power_GND</text>
</g>
</g>
</svg>
<div class="vbar"><span></span></div>
<div class="hbar"><span></span></div>
</div>
<div class="tools right">
<button class="on" aria-label="Select"><svg><use href="#pointer"/></svg></button>
<button aria-label="Highlight net"><svg><use href="#hlnet"/></svg></button>
<button aria-label="Place symbol"><svg><use href="#opamp"/></svg></button>
<button aria-label="Place power"><svg><use href="#power"/></svg></button>
<button aria-label="Wire"><svg><use href="#wire"/></svg></button>
<button aria-label="Bus"><svg><use href="#bus"/></svg></button>
<button aria-label="Wire entry"><svg><use href="#went"/></svg></button>
<button aria-label="Bus entry"><svg><use href="#bent"/></svg></button>
<button aria-label="No connect"><svg><use href="#nc"/></svg></button>
<button aria-label="Junction"><svg><use href="#junction"/></svg></button>
<button aria-label="Net label"><svg viewBox="0 0 24 24"><text x="12" y="16" text-anchor="middle" class="big">A</text><path d="M1 22h22" stroke="#1f9a40" stroke-width="3"/></svg></button>
<button aria-label="Global label"><svg viewBox="0 0 24 24"><path d="M1 5h12l6 7-6 7H1z" fill="#fff" stroke="#b8282c" stroke-width="2"/><path d="M19 12h5" stroke="#1f9a40" stroke-width="1.500"/><text x="7.500" y="17" text-anchor="middle" class="mid">A</text></svg></button>
<button aria-label="Hierarchical label"><svg viewBox="0 0 24 24"><use href="#sheetbg"/><text x="6" y="16" text-anchor="middle" class="mid">A</text><path d="M11 8h4l5 4-5 4h-4z" fill="#fff" stroke="#c79a20" stroke-width="1.500"/><path d="M20 12h4" stroke="#3a3"/></svg></button>
<button aria-label="Sheet"><svg><use href="#sheets"/></svg></button>
<button aria-label="Import pin"><svg viewBox="0 0 24 24"><path d="M1 1h13v17H1z" fill="#ddd" stroke="#999"/><path d="M3 3h14v17H3z" fill="#eee" stroke="#999"/><path d="M6 6h17v17H6z" fill="#f4f4f4" stroke="#999"/><path d="M24 3h-5V0l-7 6 7 6V9h5z" fill="#27b6c6" stroke="#155"/><text x="11" y="21" text-anchor="middle" class="small">A</text><path d="M16 14h3l2 3-2 3h-3z" fill="#fff" stroke="#c79a20"/></svg></button>
<button aria-label="Sheet pin"><svg viewBox="0 0 24 24"><use href="#sheetbg"/><path d="M1 8h4l5 4-5 4H1z" fill="#fff" stroke="#c79a20" stroke-width="1.500"/><text x="16" y="16" text-anchor="middle" class="mid">A</text></svg></button>
<button aria-label="Dashed line"><svg><use href="#dash"/></svg></button>
<button aria-label="Text"><svg><use href="#text"/></svg></button>
<button aria-label="Image"><svg><use href="#camera"/></svg></button>
<button aria-label="Delete"><svg><use href="#bin"/></svg></button>
</div>
</div>
<div class="message"></div>
<footer class="status"><span>Z 6.99</span><span>X 80.00&ensp;Y 47.00</span><span>dx 80.00&ensp;dy 47.00&ensp;dist 92.78</span><span>grid 1.2700</span></footer>
</section>
</main>
</body>
</html>
```
FILE: styles.css
```css
*, *::before { box-sizing: border-box; }
body {
  margin: 0;
  font: 13px/18px "Open Sans", "Noto Sans", sans-serif;
  color: #1a1a1a;
  background: #c9c9c9;
}
button { border: 0; padding: 0; background: none; font: inherit; color: inherit; }
.sprite { position: absolute; width: 0; height: 0; }

.desktop {
  display: grid;
  grid-template-columns: 978fr 773fr;
  column-gap: 3px;
  height: 100vh;
  padding-bottom: 8px;
  background: linear-gradient(90deg, #d6d6d6 255px, #c6c6c6 255px);
}
.window {
  display: flex;
  flex-direction: column;
  min-width: 0;
  overflow: hidden;
  background: #f2f2f2;
  border-bottom: 1px solid #999;
  border-left: 1px solid #c4c4cc;
}
.pcb { border-radius: 0 0 8px 8px; border-right: 1px solid #aaa; }
.sch { border-radius: 0 0 0 8px; }

.titlebar {
  display: flex;
  align-items: center;
  height: 25px;
  padding: 0 7px 4px;
  background: #fff;
  flex: none;
}
.titlebar h1 {
  flex: 1;
  min-width: 0;
  margin: 0 0 0 3px;
  font-size: 13px;
  font-weight: 400;
  white-space: nowrap;
  overflow: hidden;
}
.logo { width: 18px; height: 18px; flex: none; }
.pcb .titlebar { color: #999; }
.winctl { display: flex; flex: none; }
.winctl button { width: 54px; height: 18px; display: grid; place-items: center; }
.pcb .winctl { margin-right: -6px; }
.sch .winctl { margin-right: -8px; }
.winctl svg { width: 12px; height: 12px; fill: none; stroke: currentColor; }

.menu { display: flex; gap: 17px; height: 24px; padding: 4px 8px 0; background: #fff; flex: none; }
.pcb .menu { color: #555; }

.toolbar { display: flex; align-items: center; height: 30px; padding-left: 1px; flex: none; }
.sch .toolbar { height: 31px; padding-left: 2px; }
.toolbar button { width: 28px; height: 28px; display: grid; place-items: center; flex: none; }
.toolbar button svg, .tools svg { width: 24px; height: 24px; }
.toolbar hr { width: 1px; height: 20px; margin: 0 9px; border: 0; background: #c8c8c8; flex: none; }
.toolbar.second { height: 29px; }

.drop { position: relative; height: 22px; background: #fcfcfc; border-bottom: 1px solid #ddd; }
.drop select {
  width: 100%;
  height: 100%;
  padding: 0 0 0 2px;
  border: 0;
  background: none;
  appearance: none;
  font: inherit;
  color: inherit;
}
.drop svg { position: absolute; right: 5px; top: 8px; width: 10px; height: 6px; }
.drop.layer { width: 112px; border: 1px solid #aaa; background: #fff; font-size: 14px; }
.drop.layer select { padding-left: 12px; }
.chip { position: absolute; left: 3px; top: 6px; width: 7px; height: 7px; background: #841518; }
.w-track { width: 202px; margin-right: 3px; }
.w-via { width: 259px; }
.w-grid { width: 232px; }
.w-zoom { width: 115px; }

.work { display: flex; flex: 1; min-height: 0; }
.tools { display: flex; flex-direction: column; flex: none; width: 28px; padding-top: 1px; }
.tools button { width: 28px; height: 28px; display: grid; place-items: center; border: 1px solid transparent; flex: none; }
.tools hr { width: 20px; height: 1px; margin: 2px auto; border: 0; background: #c8c8c8; flex: none; }
.tools .on { background: #b4d5f2; border-color: #79a9de; }
.pcb .tools.right { width: 30px; border-right: 2px solid #ccc; }
.sch .tools.right { width: 26px; overflow: hidden; }

.canvas-area { display: grid; grid-template: 1fr 20px / 1fr 21px; flex: 1; min-width: 0; }
.canvas { width: 100%; height: 100%; min-height: 0; }
.canvas.board { background: #020607; }
.canvas.sheet { background: #fff; }
.vbar, .hbar { display: flex; }
.vbar { flex-direction: column; align-items: center; }
.hbar { align-items: center; }
.vbar span, .hbar span { background: #868886; }
.pcb .vbar span { width: 14px; height: 20px; margin-top: 332px; }
.pcb .hbar span { width: 20px; height: 14px; margin-left: 379px; }
.sch .vbar span { width: 14px; height: 54px; margin-top: 264px; }
.sch .hbar span { width: 44px; height: 13px; margin-left: 271px; }

.layers { width: 199px; flex: none; background: linear-gradient(90deg, #f2f2f2 150px, #e9ebec 180px, #c4c6c6); }
.layers h2 {
  height: 11px;
  margin: 0;
  padding-left: 1px;
  overflow: hidden;
  font: 13px/8px "Liberation Sans", sans-serif;
  background: linear-gradient(#bbb, #d8d8d8);
}
.tabs { display: flex; height: 22px; background: linear-gradient(#d6d6d6, #ececec); border-bottom: 1px solid #aaa; }
.tabs button { padding: 0 4px; border-right: 1px solid #bbb; background: #e2e2e2; }
.tabs .sel { margin-left: 2px; background: #fafafa; }
.layers ul { display: flex; flex-direction: column; height: 394px; margin: 0; padding: 2px 0 0 6px; list-style: none; font-size: 14px; }
.layers li { display: flex; align-items: center; flex: 1; min-height: 0; padding-left: 8px; }
.layers .cur { padding-left: 2px; }
.layers .cur::before { content: ""; border-left: 6px solid #4454a8; border-top: 6px solid transparent; border-bottom: 6px solid transparent; }
.layers i { width: 17px; height: 15px; border: 1px solid #555; }
.layers label { display: flex; align-items: center; }
.layers input {
  appearance: none;
  display: grid;
  place-items: center;
  width: 15px;
  height: 15px;
  margin: 0 5px 0 0;
  border-radius: 3px;
  background: #1f62b4;
}
.layers input::before { content: ""; width: 8px; height: 5px; margin-top: -2px; border: solid #dbe8f8; border-width: 0 0 1px 1px; rotate: -45deg; }
.red { background: #851518; }
.green { background: #0f8743; }
.purple { background: #852886; }
.navy { background: #292a78; }
.aqua { background: #1dbfc2; }
.sea { background: #108585; }
.olive { background: #868630; }
.light { background: #c4c4c4; }
.yellow { background: #c3c430; }
.pink { background: #a83c98; }
.midgray { background: #858785; }

.info {
  display: grid;
  grid-template-columns: 58fr 109fr 105fr 103fr 65fr 73fr 88fr 97fr 117fr 149fr;
  height: 39px;
  margin: 0;
  padding: 1px 0 0 12px;
  border-top: 1px solid #e0e0e0;
  line-height: 18px;
  white-space: nowrap;
  flex: none;
}
.info div { min-width: 0; overflow: hidden; }
.info dd { margin: 0; }
.message { height: 39px; border-top: 1px solid #ddd; flex: none; }
.status {
  display: grid;
  height: 23px;
  border-top: 1px solid #d8d8d8;
  line-height: 24px;
  white-space: nowrap;
  flex: none;
}
.status span { min-width: 0; overflow: hidden; }
.pcb .status { grid-template-columns: 65fr 197fr 308fr 225fr 175fr; padding-left: 6px; }
.sch .status { grid-template-columns: 67fr 197fr 308fr 196fr; padding-left: 5px; }

.net-word { font: bold 8px "Liberation Sans", sans-serif; fill: #fff; }
.sym { font: bold 11px "DejaVu Sans", sans-serif; fill: #4a3a3a; }
.unit { font: 14px "DejaVu Sans", sans-serif; fill: #333; }
.unit.mm { font-size: 12px; }
.big { font: 18px "DejaVu Sans", sans-serif; fill: #222; }
.mid { font: 12px "DejaVu Sans", sans-serif; }
.small { font: 9px "DejaVu Sans", sans-serif; }
.pcbtext, .schtext { font-family: "DejaVu Sans Mono", monospace; }
.schtext { font-size: 22px; }
.t34 { font-size: 34px; }
.t24 { font-size: 24px; }
.t18 { font-size: 18px; }
.t5 { font-size: 5px; }
.cyan { fill: #7cc4c3; }
.silver { fill: #c2c2c2; }
.white { fill: #f3eeee; }
.teal { fill: #108585; }
.gray { fill: #858585; }
.coral { fill: #f25050; }
```
